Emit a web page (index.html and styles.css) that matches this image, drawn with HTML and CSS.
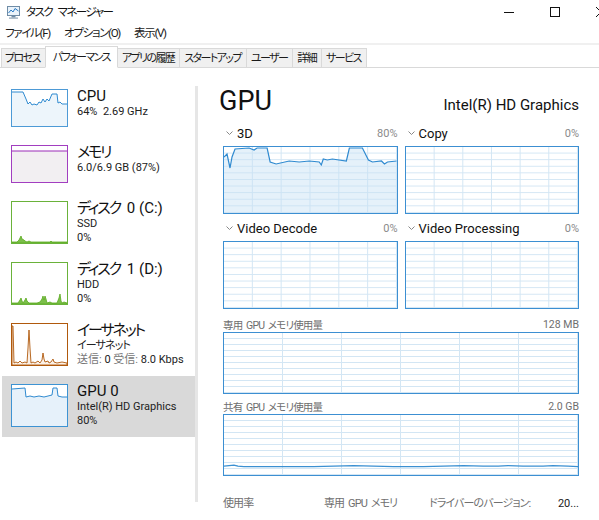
FILE: index.html
```html
<!DOCTYPE html>
<html lang="ja">
<head>
<meta charset="utf-8">
<title>タスク マネージャー</title>
<link rel="stylesheet" href="styles.css">
</head>
<body>
<div class="window">
  <header class="titlebar">
    <svg class="app-icon" width="15" height="13" viewBox="0 0 15 13">
      <rect x="1.5" y="0.5" width="12" height="9" fill="#eaf3fb" stroke="#6f8ca6"/>
      <polyline points="2.5,7 5,4 7,6 9,2.5 12.5,5" fill="none" stroke="#2a7bc4"/>
      <rect x="5.5" y="10" width="4" height="1.5" fill="#6f8ca6"/>
      <rect x="3" y="11.5" width="9" height="1.2" fill="#8ea3b6"/>
    </svg>
    <span class="title">タスク マネージャー</span>
    <div class="controls">
      <span class="ctl"><svg width="10" height="10" viewBox="0 0 10 10"><line x1="0" y1="5.5" x2="10" y2="5.5" stroke="#111"/></svg></span>
      <span class="ctl"><svg width="10" height="10" viewBox="0 0 10 10"><rect x="0.5" y="0.5" width="9" height="9" fill="none" stroke="#111"/></svg></span>
      <span class="ctl"><svg width="10" height="10" viewBox="0 0 10 10"><path d="M0 0 L10 10 M10 0 L0 10" stroke="#111"/></svg></span>
    </div>
  </header>

  <nav class="menubar">
    <span class="menu-item">ファイル(F)</span>
    <span class="menu-item">オプション(O)</span>
    <span class="menu-item">表示(V)</span>
  </nav>

  <div class="tabstrip">
    <span class="tab">プロセス</span>
    <span class="tab tab-active">パフォーマンス</span>
    <span class="tab">アプリの履歴</span>
    <span class="tab">スタートアップ</span>
    <span class="tab">ユーザー</span>
    <span class="tab">詳細</span>
    <span class="tab">サービス</span>
  </div>

  <main class="content">
    <aside class="sidebar">
      <ul class="devices">
        <li class="device">
          <div class="thumb thumb-sm thumb-cpu">
            <svg viewBox="0 0 55 36" preserveAspectRatio="none">
              <polygon points="0,2 11,2 14,9 16,14 18,12 20,15 22,14 25,15 27,12 29,13 31,9 33,12 35,9 37,11 40,4 45,4 46,13 48,12 50,14 55,14 55,36 0,36" fill="#edf5fb"/>
              <polyline points="0,2 11,2 14,9 16,14 18,12 20,15 22,14 25,15 27,12 29,13 31,9 33,12 35,9 37,11 40,4 45,4 46,13 48,12 50,14 55,14" fill="none" stroke="#2f8ad0" stroke-width="1"/>
            </svg>
          </div>
          <div class="device-text">
            <div class="device-name">CPU</div>
            <div class="device-sub">64%&nbsp;&nbsp;2.69 GHz</div>
          </div>
        </li>
        <li class="device">
          <div class="thumb thumb-sm thumb-mem">
            <svg viewBox="0 0 55 36" preserveAspectRatio="none">
              <rect x="0" y="5" width="55" height="31" fill="#f2eff2"/>
              <line x1="0" y1="5" x2="55" y2="5" stroke="#9b2cb8" stroke-width="1"/>
            </svg>
          </div>
          <div class="device-text">
            <div class="device-name"><span class="jp-name">メモリ</span></div>
            <div class="device-sub">6.0/6.9 GB (87%)</div>
          </div>
        </li>
        <li class="device">
          <div class="thumb thumb-disk">
            <svg viewBox="0 0 55 41" preserveAspectRatio="none">
              <polygon points="0,41 0,40 5,40 7,38 8,36 9,34 10,37 12,38 13,39 15,40 17,39 19,40 38,40 39,39 40,40 55,40 55,41" fill="#7bbf4a" stroke="#5aaa1e" stroke-width="0.8"/>
            </svg>
          </div>
          <div class="device-text">
            <div class="device-name"><span class="jp-name">ディスク</span> 0 (C:)</div>
            <div class="device-sub">SSD</div>
            <div class="device-sub">0%</div>
          </div>
        </li>
        <li class="device">
          <div class="thumb thumb-disk">
            <svg viewBox="0 0 55 41" preserveAspectRatio="none">
              <polygon points="0,41 0,40 6,40 8,37 9,35 10,38 11,40 13,37 14,35 15,38 17,40 25,40 28,39 30,36 31,33 32,37 33,33 34,36 35,40 38,39 40,40 45,40 47,35 48,31 49,38 50,40 52,39 55,40 55,41" fill="#7bbf4a" stroke="#5aaa1e" stroke-width="0.8"/>
            </svg>
          </div>
          <div class="device-text">
            <div class="device-name"><span class="jp-name">ディスク</span> 1 (D:)</div>
            <div class="device-sub">HDD</div>
            <div class="device-sub">0%</div>
          </div>
        </li>
        <li class="device">
          <div class="thumb thumb-eth">
            <svg viewBox="0 0 55 41" preserveAspectRatio="none">
              <polygon points="0,41 0,2 1,2 2,39 4,38 6,39 8,37 10,39 13,38 15,39 16,24 17,6 18,24 19,39 21,38 23,39 26,37 28,39 30,36 31,29 32,35 33,38 36,37 37,39 39,38 41,35 42,38 45,39 50,38 55,39 55,41" fill="#fbf1e8" stroke="#b0590c" stroke-width="0.9"/>
            </svg>
          </div>
          <div class="device-text">
            <div class="device-name"><span class="jp-name">イーサネット</span></div>
            <div class="device-sub jp">イーサネット</div>
            <div class="device-sub"><span class="muted">送信:</span> 0 <span class="muted">受信:</span> 8.0 Kbps</div>
          </div>
        </li>
        <li class="device device-selected">
          <div class="thumb thumb-gpu">
            <svg viewBox="0 0 55 41" preserveAspectRatio="none">
              <polygon points="0,4 13,3 14,12 18,11 22,12 27,11 32,12 36,11 40,10 41,3 45,3 46,11 50,12 55,12 55,41 0,41" fill="#e6f1fa"/>
              <polyline points="0,4 13,3 14,12 18,11 22,12 27,11 32,12 36,11 40,10 41,3 45,3 46,11 50,12 55,12" fill="none" stroke="#2f8ad0" stroke-width="1"/>
            </svg>
          </div>
          <div class="device-text">
            <div class="device-name">GPU 0</div>
            <div class="device-sub">Intel(R) HD Graphics</div>
            <div class="device-sub">80%</div>
          </div>
        </li>
      </ul>
      <div class="scrollbar"></div>
    </aside>

    <section class="detail">
      <div class="detail-head">
        <h1 class="detail-title">GPU</h1>
        <span class="detail-model">Intel(R) HD Graphics</span>
      </div>

      <div class="engines">
        <div class="engine">
          <div class="engine-label">
            <svg class="chev" width="7" height="4" viewBox="0 0 7 4"><polyline points="0.5,0.5 3.5,3.5 6.5,0.5" fill="none" stroke="#888"/></svg>
            <span class="engine-name">3D</span>
            <span class="engine-pct">80%</span>
          </div>
          <div class="graph graph-engine">
            <svg viewBox="0 0 172 66" preserveAspectRatio="none">
              <polygon points="0,10 3,7 6,21 8,10 11,2 25,1 30,3 33,1 43,1 46,15 52,17 65,14 75,15 85,14 95,15 97,18 99,12 103,13 108,12 122,14 125,1 138,1 144,13 148,15 157,14 160,17 163,15 172,14 172,66 0,66" fill="rgba(198,224,244,0.45)"/>
              <polyline points="0,10 3,7 6,21 8,10 11,2 25,1 30,3 33,1 43,1 46,15 52,17 65,14 75,15 85,14 95,15 97,18 99,12 103,13 108,12 122,14 125,1 138,1 144,13 148,15 157,14 160,17 163,15 172,14" fill="none" stroke="#2f8ad0" stroke-width="1.2"/>
            </svg>
          </div>
        </div>
        <div class="engine">
          <div class="engine-label">
            <svg class="chev" width="7" height="4" viewBox="0 0 7 4"><polyline points="0.5,0.5 3.5,3.5 6.5,0.5" fill="none" stroke="#888"/></svg>
            <span class="engine-name">Copy</span>
            <span class="engine-pct">0%</span>
          </div>
          <div class="graph graph-engine"></div>
        </div>
        <div class="engine">
          <div class="engine-label">
            <svg class="chev" width="7" height="4" viewBox="0 0 7 4"><polyline points="0.5,0.5 3.5,3.5 6.5,0.5" fill="none" stroke="#888"/></svg>
            <span class="engine-name">Video Decode</span>
            <span class="engine-pct">0%</span>
          </div>
          <div class="graph graph-engine"></div>
        </div>
        <div class="engine">
          <div class="engine-label">
            <svg class="chev" width="7" height="4" viewBox="0 0 7 4"><polyline points="0.5,0.5 3.5,3.5 6.5,0.5" fill="none" stroke="#888"/></svg>
            <span class="engine-name">Video Processing</span>
            <span class="engine-pct">0%</span>
          </div>
          <div class="graph graph-engine"></div>
        </div>
      </div>

      <div class="memory-block memory-dedicated">
        <div class="mem-label"><span class="jp">専用 GPU メモリ使用量</span><span>128 MB</span></div>
        <div class="graph graph-mem"></div>
      </div>
      <div class="memory-block">
        <div class="mem-label"><span class="jp">共有 GPU メモリ使用量</span><span>2.0 GB</span></div>
        <div class="graph graph-mem">
          <svg viewBox="0 0 355 61" preserveAspectRatio="none">
            <polyline points="0,52 5,51.5 10,51 14,52 20,52.5 60,52.5 90,52.5 110,52 130,51.5 150,52 170,52.5 200,52.5 220,52 240,51.5 260,52 275,52 285,51.5 300,52 320,52 330,51.5 345,52 355,52.5" fill="none" stroke="#3a90d2" stroke-width="1.2"/>
          </svg>
        </div>
      </div>

      <div class="stats">
        <span class="stat jp">使用率</span>
        <span class="stat jp">専用 GPU メモリ</span>
        <span class="stat jp">ドライバーのバージョン:</span>
        <span class="stat stat-value">20...</span>
      </div>
    </section>
  </main>
</div>
</body>
</html>
```

FILE: styles.css
```css
* { box-sizing: border-box; margin: 0; padding: 0; }

html, body {
  width: 599px;
  height: 520px;
  overflow: hidden;
  background: #ffffff;
}

body {
  font-family: Roboto, "Noto Sans CJK JP", sans-serif;
  font-feature-settings: "palt";
  color: #1a1a1a;
  font-size: 12px;
}

.jp { letter-spacing: -0.08em; word-spacing: 2px; }
.jp-name { letter-spacing: -0.14em; padding-right: 3px; }

.window { width: 599px; height: 520px; display: flex; flex-direction: column; }

/* title bar */
.titlebar {
  height: 24px;
  display: flex;
  align-items: center;
  padding-left: 6px;
}
.app-icon { margin-right: 5px; flex: none; }
.title { font-size: 11.5px; line-height: 16px; color: #111; letter-spacing: -1.5px; word-spacing: 4px; }
.controls { margin-left: auto; margin-right: -25px; display: flex; height: 24px; }
.ctl { width: 46px; display: flex; align-items: center; justify-content: center; }

/* menu */
.menubar {
  height: 19px;
  display: flex;
  align-items: center;
  padding-left: 5px;
  gap: 14px;
}
.menu-item { font-size: 11.5px; line-height: 19px; letter-spacing: -1.3px; }

/* tabs */
.tabstrip {
  height: 25px;
  border-top: 2px solid #f0f0f0;
  border-bottom: 1px solid #d9d9d9;
  display: flex;
  align-items: flex-end;
  padding-left: 1px;
}
.tab {
  height: 20px;
  margin-bottom: -1px;
  margin-left: -1px;
  padding: 0 5px 0 4px;
  font-size: 11px;
  line-height: 19px;
  letter-spacing: -1.6px;
  background: #f0f0f0;
  border: 1px solid #d9d9d9;
  white-space: nowrap;
}
.tab:first-child { margin-left: 0; padding-left: 3px; }
.tab-active {
  height: 22px;
  background: #ffffff;
  border-bottom-color: #ffffff;
  padding: 0 7px 0 7px;
  line-height: 21px;
  position: relative;
  z-index: 1;
}

/* main */
.content { flex: 1; display: flex; min-height: 0; }

.sidebar { width: 198px; flex: none; display: flex; }
.devices { list-style: none; width: 193px; margin-left: 2px; padding-top: 13px; }
.device {
  display: flex;
  align-items: flex-start;
  padding: 8px 0 10px 9px;
}
.device-selected { background: #d9d9d9; }

.thumb { width: 57px; height: 43px; border: 1px solid #3d93d3; flex: none; background: #fff; }
.thumb svg { display: block; width: 100%; height: 100%; }
.thumb-sm { height: 38px; }
.thumb-cpu { border-color: #4d9ad6; }
.thumb-mem { border-color: #a23ec0; }
.thumb-disk { border-color: #6ab23a; }
.thumb-eth { border-color: #b0590c; }
.thumb-gpu { border-color: #3d93d3; }

.device-text { margin-left: 9px; margin-top: -2px; margin-bottom: -5px; }
.device-name { font-size: 15px; line-height: 18px; color: #111; }
.device-sub { font-size: 11px; line-height: 14px; color: #222; white-space: nowrap; }
.muted { color: #777; }

.scrollbar {
  width: 3px;
  margin-top: 18px;
  height: 416px;
  background: #e6e6e6;
}

/* detail */
.detail { flex: 1; padding: 17px 20px 0 25px; display: flex; flex-direction: column; }
.detail-head { display: flex; justify-content: space-between; align-items: baseline; }
.detail-title { font-size: 27px; font-weight: normal; line-height: 32px; color: #111; margin-left: -4px; }
.detail-model { font-size: 15px; line-height: 20px; color: #111; }

.engines {
  margin-top: 6px;
  display: grid;
  grid-template-columns: 1fr 1fr;
  column-gap: 7px;
  row-gap: 4px;
}
.engine-label { height: 23px; display: flex; align-items: center; padding-left: 3px; padding-bottom: 2px; }
.chev { margin-right: 4px; margin-top: -1px; }
.engine-name { font-size: 13px; line-height: 18px; color: #111; }
.engine-pct { margin-left: auto; font-size: 11px; color: #8a8a8a; }

.graph {
  border: 1px solid #3c8fd2;
  background-color: #ffffff;
  background-image:
    linear-gradient(90deg, #d3e6f4 1px, transparent 1px),
    linear-gradient(180deg, #d3e6f4 1px, transparent 1px);
  background-size: calc(100% / 6) 100%, 100% 10%;
  background-position: -1px 0, 0 -1px;
}
.graph svg { display: block; width: 100%; height: 100%; }
.graph-engine { height: 68px; }

.memory-block { margin-top: 4px; }
.memory-dedicated { margin-top: 7px; }
.mem-label {
  height: 16px;
  display: flex;
  justify-content: space-between;
  align-items: center;
  font-size: 10.5px;
  color: #6e6e6e;
}
.graph-mem { height: 62px; }

.stats {
  margin-top: 20px;
  display: grid;
  grid-template-columns: 101px 105px 1fr auto;
  font-size: 11px;
  line-height: 16px;
  color: #707070;
}
.stat-value { color: #1a1a1a; }
```
